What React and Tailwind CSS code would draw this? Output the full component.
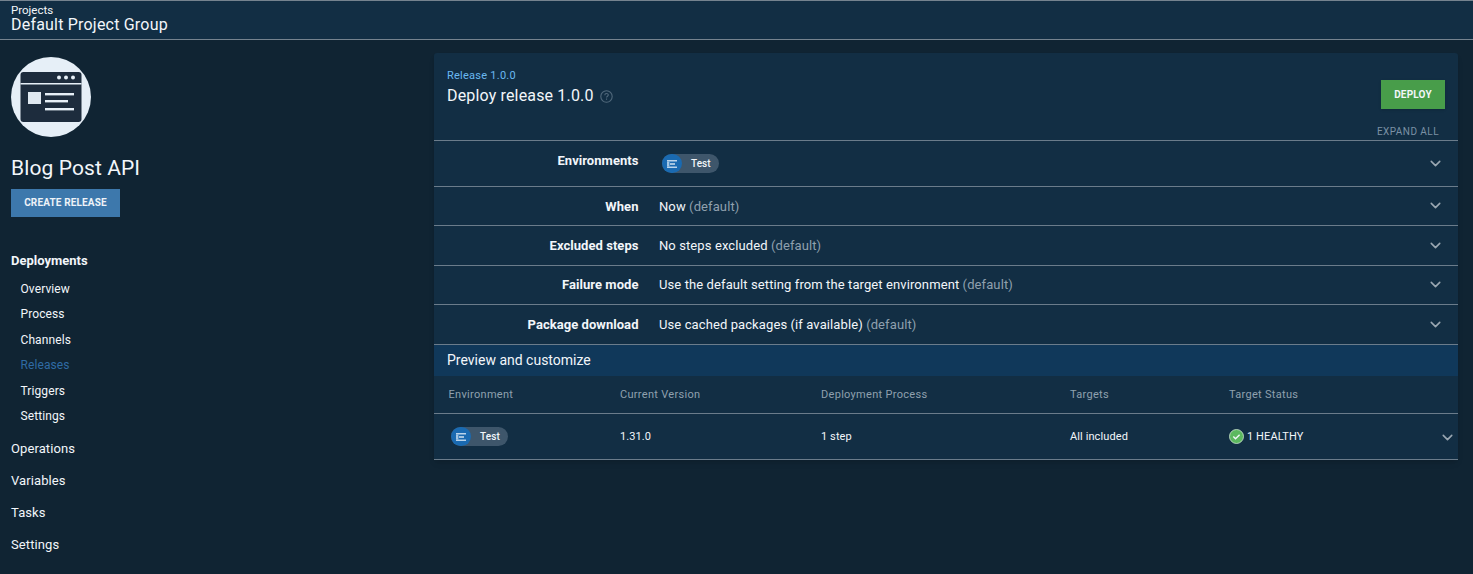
import { ChevronDown } from 'lucide-react'

function EnvIcon() {
  return (
    <svg width="10" height="8" viewBox="0 0 10 8" className="shrink-0">
      <path d="M0 0h10v1.5H0z" fill="#b9d3ea" />
      <path d="M0 1.5h2.4v5H0z" fill="#a3c6e4" />
      <path d="M3 3.3h5v1.4H3z" fill="#dfeaf4" />
      <path d="M0 6.5h10V8H0z" fill="#b9d3ea" />
    </svg>
  )
}

function EnvChip() {
  return (
    <div className="flex items-center h-[19px] w-[57px] rounded-full bg-[#3e566b]">
      <div className="flex items-center justify-center w-[20px] h-[19px] rounded-full bg-[#1a6ab1] shrink-0">
        <EnvIcon />
      </div>
      <span className="ml-[9px] text-[10px] font-medium text-[#f2f6fa]">Test</span>
    </div>
  )
}

function Chevron({ className = '' }) {
  return <ChevronDown size={17} strokeWidth={2.2} className={`text-[#9aa7b2] ${className}`} />
}

function FormRow({ label, value, hint, height, nudge = '' }) {
  return (
    <div className={`flex items-center border-b border-[#6b7c8b] pr-[14px] ${height}`}>
      <div className={`w-[204.5px] text-right text-[13px] font-bold tracking-[0.05px] text-[#f2f6fa] ${nudge}`}>{label}</div>
      <div className={`flex-1 ml-[20.5px] text-[13px] tracking-[0.1px] text-[#f2f6fa] ${nudge}`}>
        {value} <span className="text-[#8fa0ae]">{hint}</span>
      </div>
      <Chevron className="mt-[-1px]" />
    </div>
  )
}

function SideLink({ children, active }) {
  return (
    <div className={`h-[25.5px] flex items-center pl-[9.5px] text-[12px] font-[450] tracking-[0.1px] ${active ? 'text-[#2f6ba3]' : 'text-[#f2f6fa]'}`}>
      {children}
    </div>
  )
}

function SideHead({ children }) {
  return <div className="h-[32px] flex items-center text-[13px] font-[450] tracking-[0.1px] text-[#f2f6fa]">{children}</div>
}

export default function App() {
  return (
    <div className="w-[1473px] h-[574px] overflow-hidden bg-[#102433] font-['Roboto',sans-serif]">
      <header className="h-[40px] bg-[#122e44] border-t border-b border-[#75838f] pl-[11px] text-[#f2f6fa]">
        <div className="text-[11.5px] leading-[12px] pt-[3px]">Projects</div>
        <div className="text-[16px] leading-[17px] tracking-[0.2px]">Default Project Group</div>
      </header>

      <div className="flex">
        <aside className="w-[434px] shrink-0 pl-[11px] pt-[17px]">
          <svg width="80" height="80" viewBox="0 0 80 80" className="block">
            <circle cx="40" cy="40" r="40" fill="#e6eff7" />
            <rect x="9.5" y="15" width="61" height="50" rx="3" fill="#1d2c3d" />
            <path d="M9.5 26h61v1.5h-61z" fill="#e6eff7" />
            <circle cx="48" cy="20.5" r="2" fill="#e6eff7" />
            <circle cx="55" cy="20.5" r="2" fill="#e6eff7" />
            <circle cx="62" cy="20.5" r="2" fill="#e6eff7" />
            <rect x="17" y="35" width="13" height="12" fill="#dfe8f0" />
            <rect x="34" y="36" width="29" height="2.4" fill="#e6eff7" />
            <rect x="34" y="43" width="23" height="2.4" fill="#e6eff7" />
            <rect x="34" y="51" width="29" height="2.4" fill="#e6eff7" />
          </svg>
          <h1 className="mt-[18px] text-[21px] leading-[26px] tracking-[0.1px] text-[#f2f6fa]">Blog Post API</h1>
          <button className="mt-[8px] block w-[109px] h-[28px] pb-[1px] bg-[#3d78ac] text-[10px] font-bold tracking-[0.15px] text-[#eef3f8]">
            CREATE RELEASE
          </button>
          <nav className="mt-[28px]">
            <div className="h-[32px] flex items-center text-[13px] font-bold text-[#f2f6fa]">Deployments</div>
            <div className="mt-[-1px] mb-[4px]">
              <SideLink>Overview</SideLink>
              <SideLink>Process</SideLink>
              <SideLink>Channels</SideLink>
              <SideLink active>Releases</SideLink>
              <SideLink>Triggers</SideLink>
              <SideLink>Settings</SideLink>
            </div>
            <SideHead>Operations</SideHead>
            <SideHead>Variables</SideHead>
            <SideHead>Tasks</SideHead>
            <SideHead>Settings</SideHead>
          </nav>
        </aside>

        <main className="mt-[13px] w-[1024px] h-[407px] bg-[#122e44] rounded-t-[3px] shadow-md">
          <div className="h-[88px] border-b border-[#6b7c8b] relative px-[13px] pt-[17px]">
            <div className="text-[11px] leading-[12px] tracking-[0.25px] text-[#6ab8f0]">Release 1.0.0</div>
            <div className="flex items-center gap-[6px] mt-[4px]">
              <span className="text-[16px] leading-[20px] tracking-[0.16px] text-[#f2f6fa]">Deploy release 1.0.0</span>
              <svg width="13" height="13" viewBox="0 0 13 13" fill="none">
                <circle cx="6.5" cy="6.5" r="5.7" stroke="#51697c" strokeWidth="1.1" />
                <path d="M4.8 5.2c0-2.2 3.5-2.2 3.5-.2 0 1.2-1.8 1.2-1.8 2.6" stroke="#51697c" strokeWidth="1.1" />
                <path d="M6 8.6h1.1v1.2H6z" fill="#51697c" />
              </svg>
            </div>
            <button className="absolute top-[27px] right-[13px] w-[64px] h-[29px] pb-[1px] bg-[#489d4a] text-[10px] font-bold tracking-[0.2px] text-[#f2f6fa] shadow-sm">
              DEPLOY
            </button>
            <div className="absolute top-[73px] right-[19px] text-[10px] leading-[12px] tracking-[0.45px] text-[#7b91a5]">EXPAND ALL</div>
          </div>

          <div className="flex items-center h-[46px] border-b border-[#6b7c8b] pr-[14px]">
            <div className="w-[204.5px] text-right text-[13px] font-bold tracking-[0.05px] text-[#f2f6fa] mt-[-5px]">Environments</div>
            <div className="flex-1 ml-[23.5px]"><EnvChip /></div>
            <Chevron className="mt-[-1px]" />
          </div>
          <FormRow label="When" value="Now" hint="(default)" height="h-[39px]" nudge="pt-[1px]" />
          <FormRow label="Excluded steps" value="No steps excluded" hint="(default)" height="h-[40px]" />
          <FormRow label="Failure mode" value="Use the default setting from the target environment" hint="(default)" height="h-[39px]" />
          <FormRow label="Package download" value="Use cached packages (if available)" hint="(default)" height="h-[40px]" />

          <div className="h-[31px] pb-[1px] flex items-center bg-[#10385a] pl-[13px] text-[14px] text-[#f2f6fa]">Preview and customize</div>

          <div className="grid grid-cols-[186px_201px_249px_159px_1fr] items-center h-[38px] pt-[1px] border-b border-[#6b7c8b] text-[11px] tracking-[0.3px] text-[#8fa0ae]">
            <div className="pl-[14.5px]">Environment</div>
            <div>Current Version</div>
            <div>Deployment Process</div>
            <div>Targets</div>
            <div>Target Status</div>
          </div>
          <div className="grid grid-cols-[186px_201px_249px_159px_1fr] items-center h-[46px] border-b border-[#6b7c8b] text-[11px] font-[450] tracking-[0.1px] text-[#f2f6fa]">
            <div className="pl-[17px]"><EnvChip /></div>
            <div className="pt-[1px]">1.31.0</div>
            <div className="pt-[1px]">1 step</div>
            <div className="pt-[1px]">All included</div>
            <div className="flex items-center pr-[2px]">
              <svg width="15" height="15" viewBox="0 0 15 15" className="shrink-0">
                <circle cx="7.5" cy="7.5" r="7" fill="#5cb85f" stroke="#cfe8d0" strokeWidth="0.8" />
                <path d="M4.3 7.6l2.2 2.1 4.1-3.9" fill="none" stroke="#f2f6fa" strokeWidth="1.4" />
              </svg>
              <span className="ml-[3px] pt-[1px]">1 HEALTHY</span>
              <Chevron className="ml-auto mt-[2px]" />
            </div>
          </div>
        </main>
      </div>
    </div>
  )
}
